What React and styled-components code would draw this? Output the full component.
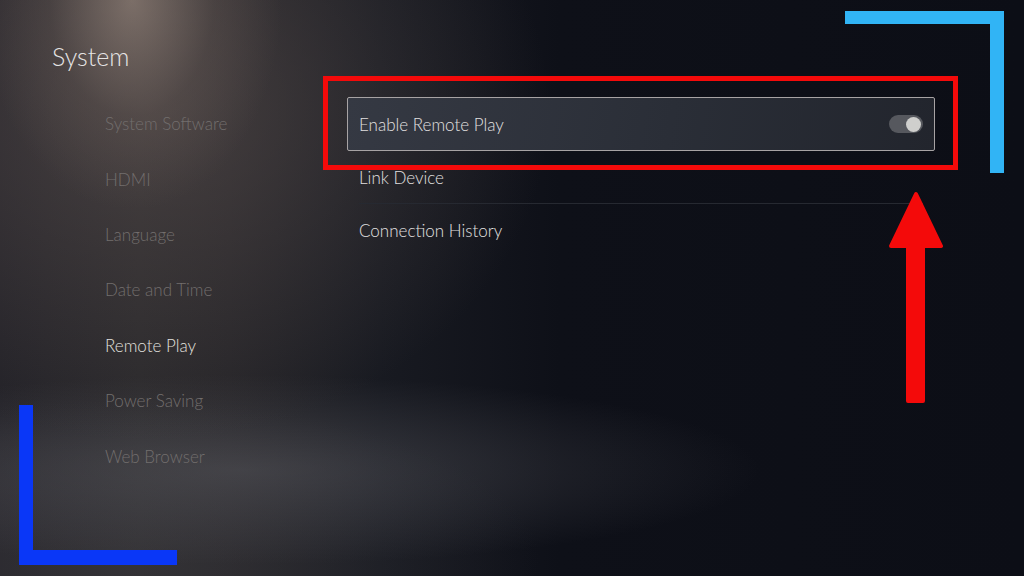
import React from "react";
import styled, { createGlobalStyle } from "styled-components";

const GlobalStyle = createGlobalStyle`
  html, body {
    margin: 0;
    padding: 0;
    background: #0c0e16;
  }
  body {
    font-family: Lato, "Open Sans", sans-serif;
  }
`;

const Page = styled.div`
  position: relative;
  display: flex;
  width: 1024px;
  height: 576px;
  overflow: hidden;
  background:
    radial-gradient(ellipse 150px 210px at 132px 0px, rgba(175, 155, 142, 0.55), rgba(120, 105, 98, 0.25) 55%, transparent 100%),
    radial-gradient(ellipse 400px 330px at 150px 110px, rgba(95, 84, 82, 0.55), transparent 100%),
    radial-gradient(ellipse 520px 95px at 240px 470px, rgba(98, 98, 104, 0.45), transparent 100%),
    radial-gradient(ellipse 420px 160px at 120px 560px, rgba(70, 68, 72, 0.4), transparent 100%),
    linear-gradient(90deg, #232228 0px, #29282b 140px, #252428 230px, #181a21 380px, #0e1018 560px, #0c0e16 1024px);
`;

const Sidebar = styled.aside`
  width: 323px;
  flex-shrink: 0;
  padding: 41px 0 0 52px;
  box-sizing: border-box;
`;

const Title = styled.h1`
  margin: 0 0 24px;
  font-size: 25px;
  line-height: 31px;
  font-weight: 300;
  color: #e6e4e4;
`;

const NavList = styled.ul`
  list-style: none;
  margin: 0;
  padding: 0 0 0 53px;
`;

const NavItem = styled.li`
  display: flex;
  align-items: center;
  height: 55.4px;
  font-size: 17px;
  font-weight: 300;
  color: ${({ active }) => (active ? "#e2e0df" : "#726e6d")};
`;

const Main = styled.main`
  flex: 1;
  padding: 97px 0 0 24px;
`;

const List = styled.div`
  width: 588px;
`;

const Framed = styled.div`
  position: relative;
`;

const RedFrame = styled.div`
  position: absolute;
  top: -21px;
  left: -24px;
  right: -23px;
  bottom: -19px;
  border: 5px solid #f40a0a;
  pointer-events: none;
`;

const Row = styled.div`
  display: flex;
  align-items: center;
  justify-content: space-between;
  box-sizing: border-box;
  height: ${({ focused }) => (focused ? "54px" : "52px")};
  padding: 0 11px;
  padding-left: ${({ focused }) => (focused ? "11px" : "12px")};
  font-size: 17px;
  font-weight: 300;
  color: #e2e0e0;
  border: ${({ focused }) => (focused ? "1px solid #a7a3a4" : "none")};
  border-radius: ${({ focused }) => (focused ? "2px" : "0")};
  background: ${({ focused }) =>
    focused ? "linear-gradient(100deg, #353943 0%, #2a2e37 55%, #22252d 100%)" : "transparent"};
`;

const Divider = styled.div`
  height: 1px;
  margin: 0 12px;
  background: #262931;
`;

const Toggle = styled.div`
  display: flex;
  align-items: center;
  justify-content: flex-end;
  box-sizing: border-box;
  width: 34px;
  height: 18px;
  padding: 0 2px;
  border-radius: 9px;
  background: #56585e;
`;

const Knob = styled.div`
  width: 15px;
  height: 15px;
  border-radius: 50%;
  background: #cfcfcd;
`;

const Arrow = styled.svg`
  position: absolute;
  left: 888px;
  top: 191px;
`;

const Corner = styled.div`
  position: absolute;
  box-sizing: border-box;
`;

const TopCorner = styled(Corner)`
  left: 845px;
  top: 11px;
  width: 159px;
  height: 162px;
  border-top: 13px solid #31b4f5;
  border-right: 14px solid #31b4f5;
`;

const BottomCorner = styled(Corner)`
  left: 19px;
  top: 405px;
  width: 158px;
  height: 160px;
  border-left: 14px solid #0a37f7;
  border-bottom: 15px solid #0a37f7;
`;

const navItems = [
  "System Software",
  "HDMI",
  "Language",
  "Date and Time",
  "Remote Play",
  "Power Saving",
  "Web Browser",
];

export default function App() {
  return (
    <>
      <GlobalStyle />
      <Page>
        <Sidebar>
          <Title>System</Title>
          <NavList>
            {navItems.map((item) => (
              <NavItem key={item} active={item === "Remote Play"}>
                {item}
              </NavItem>
            ))}
          </NavList>
        </Sidebar>
        <Main>
          <List>
            <Framed>
              <Row focused>
                <span>Enable Remote Play</span>
                <Toggle>
                  <Knob />
                </Toggle>
              </Row>
              <RedFrame />
            </Framed>
            <Row>Link Device</Row>
            <Divider />
            <Row>Connection History</Row>
          </List>
        </Main>
        <Arrow width="56" height="216" viewBox="0 0 56 216">
          <path
            d="M28 3 L53 55 L35 55 L35 210 L20 210 L20 55 L3 55 Z"
            fill="#f40a0a"
            stroke="#f40a0a"
            strokeWidth="4"
            strokeLinejoin="round"
          />
        </Arrow>
        <TopCorner />
        <BottomCorner />
      </Page>
    </>
  );
}
